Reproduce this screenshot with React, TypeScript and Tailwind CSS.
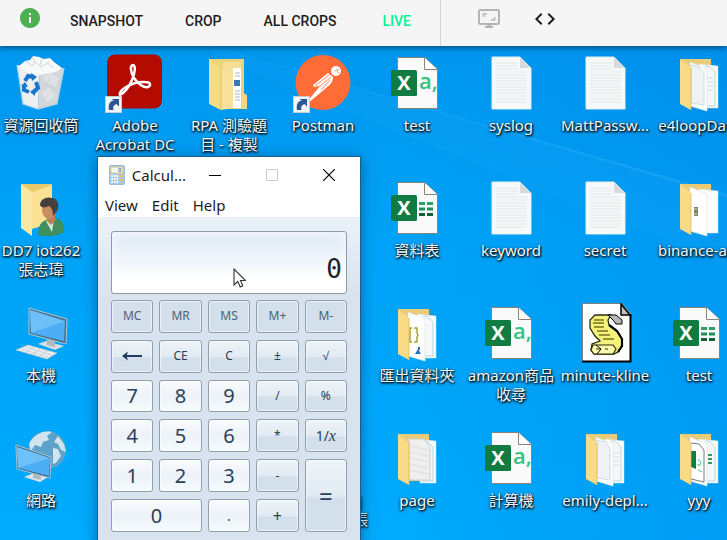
import { ReactNode } from 'react';
import { MdCode, MdInfo } from 'react-icons/md';

function Svg({ children }: { children: ReactNode }) {
  return (
    <svg viewBox="0 0 60 60" className="size-[60px] shrink-0" aria-hidden="true">
      {children}
    </svg>
  );
}

function Shortcut() {
  return (
    <g>
      <rect x="0.5" y="43.5" width="16" height="16" fill="#f2f4f7" stroke="#c8ccd2" />
      <path d="M4 57c-1-6 1-9 5-9.500L6.500 46H14v7.500l-2.500-2.500C8.500 52 7.500 54 8.500 57z" fill="#2b5797" />
    </g>
  );
}

function RecycleBin() {
  return (
    <Svg>
      <path d="M6 12 29 16 27 56 12 51z" fill="#edeff0" />
      <path d="M29 16 53 15 46 51 27 56z" fill="#d3d7da" />
      <path d="M8 13 14 8l5-1 3-4 6 1 5 2 6-1 4 4 8 6-6 4-16 3-14-3z" fill="#f8f9f9" />
      <path d="m15 8 6 5 3-4 6 5 7-4 5 5M21 4l3 5M31 6l-2 6" fill="none" stroke="#d0d5d8" />
      <path d="m31 24 8-4 9 5-3 9-8-3zM30 40l8-5 6 8-8 6z" fill="#e0e3e5" />
      <path d="m40 22-4 9 8 5M33 46l6-6" fill="none" stroke="#bfc5c9" strokeWidth="0.600" />
      <path d="M6 12 12 51 27 56 46 51 53 15" fill="none" stroke="#a9d2ea" strokeWidth="1.300" />
      <g fill="none" stroke="#1976cc" strokeWidth="4">
        <path d="m14 28 3-5 5 1" />
        <path d="m25 29 2 6-4 4" />
        <path d="m18 39-5-2v-5" />
      </g>
      <path d="m20 20 6 4-5 4zM24 35v8l-5-4zM10 33l4-4 3 5z" fill="#1976cc" />
    </Svg>
  );
}

function Acrobat() {
  return (
    <Svg>
      <rect x="2" y="1.500" width="55" height="54" rx="8" fill="#b30b00" />
      <path
        d="M15 42c4-2 9-8 12-15 3-7 4-14 1-15-3 0-3 6 1 13 4 6 10 10 14 9 4-2 2-5-3-5-6-.5-14 2-19 5-4 2-7 6-6 8z"
        fill="none"
        stroke="#fff"
        strokeWidth="2.500"
        strokeLinejoin="round"
      />
      <Shortcut />
    </Svg>
  );
}

function Postman() {
  return (
    <Svg>
      <circle cx="30" cy="29.500" r="27.500" fill="#ff6c37" />
      <circle cx="43" cy="18" r="5" fill="#fff" />
      <path d="m42 18 4-2M44 18l2 2" stroke="#ff6c37" strokeWidth="0.800" />
      <path d="m35 20 5 4c0 5-3 8-7 11l-7 6-11 9-1-1 9-11 4-5-6 1-1-2z" fill="#fff" />
      <path d="m22 33 14-11M26 34l12-10M28 37l9-10" stroke="#ff6c37" strokeWidth="0.800" />
      <Shortcut />
    </Svg>
  );
}

type FolderKind = 'code' | 'closed' | 'plain' | 'single' | 'image' | 'export' | 'sheets';

function Folder({ kind }: { kind: FolderKind }) {
  if (kind === 'closed') {
    return (
      <Svg>
        <path d="M10 6h35v34l3 2v14H19z" fill="#edd27c" />
        <path d="M24 9h18v45H24z" fill="#f5df95" />
        <path d="M34 15h8v40h-8z" fill="#fff" />
        <path d="M36 20h5M36 23h5M36 38h5M36 41h5M36 44h5M36 47h5" stroke="#a9b7c4" />
        <path d="M35 27h6v6h-6z" fill="#3479b8" />
        <path d="M22 16 34 13v42l-12 2z" fill="#f7e09a" />
        <path d="M10 6 22 15v42l-12-6z" fill="#f6da85" />
        <path d="M22 15v42" stroke="#dcb955" strokeWidth="0.800" />
        <path d="M43 40l5 3v13h-5z" fill="#f3d67f" />
      </Svg>
    );
  }
  return (
    <Svg>
      <path d="M11 6h31v47H20z" fill="#eacb78" />
      <path d="M30 11 49 13v42l-16 0z" fill="#fbfdfe" stroke="#d7e3ea" strokeWidth="0.500" />
      {kind !== 'image' && <path d="M36 13h4l6 6v34H34" fill="#f5f7f8" stroke="#a3cbe0" strokeWidth="0.800" />}
      {kind !== 'single' && <path d="M21 9 38 16v42l-17-5z" fill="#fff" stroke="#dde3e6" strokeWidth="0.700" />}
      {kind === 'single' && (
        <g>
          <path d="M22 11h15l6 8v33H22z" fill="#efefef" stroke="#b9c4ca" strokeWidth="0.700" />
          <path d="m23 18 18 4M23 24l18 4M23 30l18 4M23 36l18 4M23 42l18 4" stroke="#e2e2e2" strokeWidth="1.500" />
        </g>
      )}
      {kind === 'plain' && (
        <g>
          <path d="m22 12 8 2 5 6v32l-13-2z" fill="#f0f2f3" stroke="#bdd3df" strokeWidth="0.800" />
          <path d="M39 25h5M39 29h5M39 33h5M39 37h5" stroke="#d4dade" />
        </g>
      )}
      {kind === 'image' && (
        <g>
          <path d="M25 29h4v9h-4z" fill="#7e8566" />
          <path d="M25 31h3M25 36h3" stroke="#e0dfb8" />
        </g>
      )}
      {kind === 'export' && (
        <g>
          <path d="M25 25h-2v14h2M27 25h3v5l1 2-1 2v5h-3" fill="none" stroke="#a7a23a" strokeWidth="1.500" />
          <path d="m28 51 3-5 3 5zM31 44h2v3h-2z" fill="#2073bd" />
        </g>
      )}
      {kind === 'sheets' && (
        <g>
          <path d="m22 15 8 1 5 6v32l-13-3" fill="none" stroke="#555" strokeWidth="0.800" />
          <path d="M22 23h5v18l-5-2z" fill="#107c41" />
          <path d="M29 32c3 0 3 3 2 5h-3M29 42l4 2" stroke="#33c481" fill="none" />
          <path d="M39 27h4M39 31h4M39 35h4" stroke="#21a366" strokeWidth="2" />
        </g>
      )}
      <path d="M11 6 22 15v42l-11-6z" fill="#f9da85" />
      <path d="M22 15v42" stroke="#e0bb5c" strokeWidth="0.800" />
    </Svg>
  );
}

function Excel({ csv = false }: { csv?: boolean }) {
  return (
    <Svg>
      <path d="M10.500 4.500h27l13 12v39h-40z" fill="#fafafa" stroke="#8c8274" />
      <path d="M37.500 4.500v12h13" fill="#fff" stroke="#8c8274" />
      <rect x="4" y="17" width="26" height="26" rx="1.500" fill="#107c41" />
      <text x="17" y="37" textAnchor="middle" fill="#fff" className="font-['Open_Sans'] text-xl font-bold">
        X
      </text>
      {csv ? (
        <text x="32" y="36" fill="#33c481" className="font-['Open_Sans'] text-[22px] font-semibold">
          a,
        </text>
      ) : (
        <g>
          <path d="M32 25.500h6M40 25.500h6" stroke="#33a06a" strokeWidth="3" />
          <path d="M32 31h6M40 31h6" stroke="#1c8f57" strokeWidth="3" />
          <path d="M32 36.500h6M40 36.500h6" stroke="#185c37" strokeWidth="3" />
        </g>
      )}
    </Svg>
  );
}

function TextFile() {
  return (
    <Svg>
      <path d="M11 4h28l11 11v41H11z" fill="#f7f9f9" stroke="#e0f0f4" />
      <path
        d="M15 10h22M15 13h22M15 16h22M15 19h31M15 22h31M15 25h31M15 28h31M15 31h31M15 34h31M15 37h31M15 40h31M15 43h31M15 46h31M15 49h31"
        stroke="#e2e5e6"
      />
      <path d="M39 4v11h11z" fill="#d5dadd" />
    </Svg>
  );
}

function UserFolder() {
  return (
    <Svg>
      <path d="M10 6h31v40H20z" fill="#e9c869" />
      <path d="M21 14 41 7v38l-20 6z" fill="#fbe193" />
      <path d="M10 6 21 14v44l-11-8z" fill="#fae7a3" />
      <path d="M27 57c0-9 3-14 9-15l6 3 5-5c4 3 7 7 6 14-6 4-18 5-26 3z" fill="#3f8f5f" />
      <path d="m35 43 6 11 2-13z" fill="#dfe8e1" />
      <path d="M34 32h10v11l-4 4-4-4z" fill="#b97f55" />
      <ellipse cx="38" cy="32" rx="7" ry="9" fill="#c98d60" />
      <path d="M29 27c0-6 7-9 12-7 6 1 8 7 5 13l-4 5c0-5-1-8-4-10-4 2-8 2-9-1z" fill="#45403c" />
    </Svg>
  );
}

function Computer() {
  return (
    <Svg>
      <path d="m27 41 8-3 18 5-9 4z" fill="#d7dde1" />
      <path d="m36 35 8 3v6l-8-2z" fill="#aeb8bf" />
      <path d="m18 5 38 11-1 25-37-10z" fill="#4c6f89" stroke="#a9c9da" />
      <path d="m19 7 35 11-1 20-33-8z" fill="#4eaef5" />
      <path d="m19 7 35 11-34 12z" fill="#7cc7fb" opacity=".7" />
      <path d="m5 47 12-5 29 8-10 6z" fill="#e9ecee" stroke="#b9c3c9" strokeWidth="0.700" />
      <path d="m10 46 27 8M14 44l27 8M15 49l7-5M22 51l7-5M29 53l7-5" stroke="#c0c8cd" strokeWidth="0.700" />
    </Svg>
  );
}

function Network() {
  return (
    <Svg>
      <circle cx="36" cy="22" r="19" fill="#5ba3c9" />
      <path d="M18 16c4-9 14-14 23-12l-5 4 2 4-6 2-2 5-6-2-4 6zM47 8l6 8 2 8-5-2-3-6-4-2zM42 20l5 1 3 7-5 7-3 1z" fill="#cfe4ee" />
      <path d="m13 49 10-4 14 4-8 5z" fill="#dfe4e7" />
      <path d="m22 43 8 2v7l-8-2z" fill="#b0bac1" />
      <path d="m5 17 35 12-1 21L6 41z" fill="#3e5f78" stroke="#a9c9da" />
      <path d="m6 19 33 11-1 18-31-8z" fill="#4eaef5" />
      <path d="m6 19 33 11-32 10z" fill="#7cc7fb" opacity=".7" />
    </Svg>
  );
}

function Script() {
  return (
    <Svg>
      <path d="M7.500.5h39l9 10v48h-48z" fill="#fff" stroke="#808080" />
      <path d="M7 58.500h48.500V11" fill="none" stroke="#000" strokeWidth="2" />
      <path d="M46 1v11h9z" fill="#c0c0c0" stroke="#000" strokeWidth="1.500" />
      <path
        d="M20 12h16l-3 5 1 5 8 6 5 8v7l-4 6-4 2H19l-3-4 1-6 8-3-5-5-5-8v-8z"
        fill="#f4f27a"
        stroke="#2b2b10"
        strokeWidth="1.300"
      />
      <path d="M34 22l8 6 5 8v7l-4 6" fill="none" stroke="#000" strokeWidth="2.200" />
      <path d="M33 12h8l6 5v4h-6l-3-4z" fill="#b8b8b8" stroke="#000" />
      <path d="M18 42h20l3 4-3 5H19l-3-4z" fill="#fffbb0" stroke="#2b2b10" strokeWidth="1.200" />
      <path d="M19 17h10M18 20h11M19 24h10M22 28h11M24 32h11M28 36h11M21 46h5M30 46h3" stroke="#77751c" strokeWidth="1.400" />
      <path d="M21 42l5 4-4 5" fill="none" stroke="#000" />
    </Svg>
  );
}

type Item = { label: string; icon: ReactNode } | null;

const rows: Item[][] = [
  [
    { label: '資源回收筒', icon: <RecycleBin /> },
    { label: 'Adobe Acrobat DC', icon: <Acrobat /> },
    { label: 'RPA 測驗題目 - 複製', icon: <Folder kind="closed" /> },
    { label: 'Postman', icon: <Postman /> },
    { label: 'test', icon: <Excel csv /> },
    { label: 'syslog', icon: <TextFile /> },
    { label: 'MattPassw...', icon: <TextFile /> },
    { label: 'e4loopData', icon: <Folder kind="plain" /> },
  ],
  [
    { label: 'DD7 iot262 張志瑋', icon: <UserFolder /> },
    null,
    null,
    null,
    { label: '資料表', icon: <Excel /> },
    { label: 'keyword', icon: <TextFile /> },
    { label: 'secret', icon: <TextFile /> },
    { label: 'binance-api', icon: <Folder kind="image" /> },
  ],
  [
    { label: '本機', icon: <Computer /> },
    null,
    null,
    null,
    { label: '匯出資料夾', icon: <Folder kind="export" /> },
    { label: 'amazon商品收尋', icon: <Excel csv /> },
    { label: 'minute-kline', icon: <Script /> },
    { label: 'test', icon: <Excel /> },
  ],
  [
    { label: '網路', icon: <Network /> },
    null,
    null,
    { label: 'iot262 api j\n計算機資料張', icon: <Folder kind="plain" /> },
    { label: 'page', icon: <Folder kind="single" /> },
    { label: '計算機', icon: <Excel csv /> },
    { label: 'emily-depl...', icon: <Folder kind="plain" /> },
    { label: 'yyy', icon: <Folder kind="sheets" /> },
  ],
];

function DesktopItem({ item }: { item: Item }) {
  if (!item) return <div />;
  return (
    <div className="flex flex-col items-center gap-[3px] pt-[7px]">
      {item.icon}
      <span className="max-w-[90px] text-center text-[15px] leading-[19px] whitespace-pre-line text-[#f4f8fb] [text-shadow:1px_1px_2px_#000,0_1px_3px_#000]">
        {item.label}
      </span>
    </div>
  );
}

const memory = 'text-xs text-[#4d6178] bg-[#d3dfeb]';
const digit = 'text-xl text-[#2b4058] bg-linear-to-b from-[#f8fbfd] via-[#edf2f8] to-[#f4fdfe]';
const operator = 'text-xs text-[#2b4058] bg-linear-to-b from-[#edf4f9] from-0% via-[#e2ebf3] via-50% to-[#d3dfea] to-55%';

type Key = { name: string; tone: string; face?: ReactNode; span?: string };

const keys: Key[] = [
  { name: 'MC', tone: memory },
  { name: 'MR', tone: memory },
  { name: 'MS', tone: memory },
  { name: 'M+', tone: memory },
  { name: 'M-', tone: memory },
  {
    name: 'Backspace',
    tone: operator,
    face: (
      <svg viewBox="0 0 22 12" className="h-3 w-[22px]" aria-hidden="true">
        <path d="M5 6h16" stroke="#1f3d5c" strokeWidth="2" />
        <path d="M1 6 7 1.500 5.500 6 7 10.500z" fill="#1f3d5c" />
      </svg>
    ),
  },
  { name: 'CE', tone: operator },
  { name: 'C', tone: operator },
  { name: '±', tone: operator },
  { name: '√', tone: operator, face: <span className="font-['Liberation_Sans',sans-serif]">√</span> },
  { name: '7', tone: digit },
  { name: '8', tone: digit },
  { name: '9', tone: digit },
  { name: '/', tone: operator },
  { name: '%', tone: operator },
  { name: '4', tone: digit },
  { name: '5', tone: digit },
  { name: '6', tone: digit },
  { name: '*', tone: operator },
  {
    name: '1/x',
    tone: operator,
    face: (
      <span className="text-sm">
        1/<i className="font-['Liberation_Serif',serif] text-base">x</i>
      </span>
    ),
  },
  { name: '1', tone: digit },
  { name: '2', tone: digit },
  { name: '3', tone: digit },
  { name: '-', tone: operator },
  { name: '=', tone: operator, span: 'row-span-2', face: <span className="text-2xl">=</span> },
  { name: '0', tone: digit, span: 'col-span-2' },
  { name: '.', tone: digit, face: <span className="text-sm">.</span> },
  { name: '+', tone: operator, face: <span className="text-base">+</span> },
];

function Calculator() {
  return (
    <section
      aria-label="Calculator"
      className="absolute top-[110px] left-[97px] w-[264px] border border-[#1d5f8c] bg-white text-[#1b1b1b] shadow-[0_2px_12px_rgba(0,40,80,0.5)]"
    >
      <div className="flex h-9 items-center pr-0.5">
        <svg viewBox="0 0 16 20" className="ml-[11px] h-5 w-4" aria-hidden="true">
          <rect x="0.500" y="0.500" width="15" height="19" rx="1" fill="#a9cdea" stroke="#8db9dc" />
          <rect x="2" y="2" width="12" height="6" fill="#f3f7f4" stroke="#e5be6c" strokeWidth="0.800" />
          <path d="M10 3.500h2v3h-2z" fill="none" stroke="#4d6b88" strokeWidth="0.700" />
          <path d="M2.500 11h7M2.500 14h7M2.500 17h7" stroke="#fff" strokeWidth="2" strokeDasharray="1.600 1" />
          <path d="M11 11h3M11 15h3" stroke="#edba58" strokeWidth="2.500" />
        </svg>
        <span className="ml-[7px] grow text-[15px]">Calcul...</span>
        <button aria-label="Minimize" className="flex w-[58px] justify-center">
          <svg viewBox="0 0 12 12" className="size-3"><path d="M0 6.500h12" stroke="#000" /></svg>
        </button>
        <button aria-label="Maximize" disabled className="flex w-[58px] justify-center">
          <svg viewBox="0 0 12 12" className="size-3"><path d="M.5.5h11v11H.5z" fill="none" stroke="#ccc" /></svg>
        </button>
        <button aria-label="Close" className="flex w-[58px] justify-center">
          <svg viewBox="0 0 12 12" className="size-3"><path d="m0 0 12 12M12 0 0 12" stroke="#000" strokeWidth="1.200" /></svg>
        </button>
      </div>
      <nav className="flex h-6 items-center gap-3.5 px-[7px] text-[15px]">
        <button>View</button>
        <button>Edit</button>
        <button>Help</button>
      </nav>
      <div className="bg-linear-to-b from-[#eaf1f8] to-[#d8e3ef] to-25% px-[13px] pt-3.5 pb-4">
        <output className="flex h-[63px] items-end justify-end rounded-[3px] border border-[#8e9ba8] bg-linear-to-b from-[#e2ecf7] from-10% to-white to-80% px-1 pb-1 font-['DejaVu_Sans_Mono',monospace] text-[26px] text-[#222] shadow-[inset_0_0_10px_2px_rgba(255,255,255,0.6)]">
          0
        </output>
        <div className="mt-1.5 grid h-[232px] grid-cols-5 grid-rows-6 gap-x-1.5 gap-y-[7px]">
          {keys.map((key) => (
            <button
              key={key.name}
              aria-label={key.name}
              className={`flex items-center justify-center rounded-[3px] border border-[#8f9fb0] leading-none shadow-[inset_0_0_0_1px_rgba(255,255,255,0.5)] ${key.tone} ${key.span ?? ''}`}
            >
              {key.face ?? key.name}
            </button>
          ))}
        </div>
      </div>
    </section>
  );
}

function Pointer() {
  return (
    <svg viewBox="0 0 13 20" className="absolute top-[222px] left-[233px] h-5 w-[13px]" aria-hidden="true">
      <path d="M1 1v16l3.800-3.500 2.400 5.500 2.600-1.200L7.500 12.500h5z" fill="#fff" stroke="#333" strokeWidth="1.100" />
    </svg>
  );
}

export default function App() {
  return (
    <div className="flex h-screen flex-col overflow-hidden font-['Noto_Sans','Noto_Sans_CJK_TC',sans-serif]">
      <header className="z-10 flex h-[46px] shrink-0 items-stretch bg-[#f5f5f5] font-['Roboto',sans-serif] text-sm font-medium text-[#1d1d1d] shadow-[0_2px_5px_rgba(0,0,0,0.45)]">
        <nav className="flex items-center gap-[42px] border-r border-[#d4d4d4] pr-[29px] pb-1 pl-[18px]">
          <button aria-label="Info" className="-mr-3.5 pb-1.5 text-[#4caf50]">
            <MdInfo className="size-6" />
          </button>
          <button>SNAPSHOT</button>
          <button>CROP</button>
          <button>ALL CROPS</button>
          <button className="ml-1 text-[#00f590]">LIVE</button>
        </nav>
        <div className="flex items-center gap-8 pb-2 pl-9">
          <button aria-label="Fit to screen" className="text-[#b5b5b5]">
            <svg viewBox="0 0 24 24" className="size-6" aria-hidden="true">
              <rect x="2" y="3" width="20" height="14" rx="1" fill="none" stroke="currentColor" strokeWidth="2" />
              <path d="M6.500 10V7H10M17.500 10v3H14" fill="none" stroke="currentColor" strokeWidth="1.600" />
              <path d="M10 17h4v2h2v2H8v-2h2z" fill="currentColor" />
            </svg>
          </button>
          <button aria-label="Code">
            <MdCode className="size-6" />
          </button>
        </div>
      </header>
      <main className="relative grow overflow-hidden bg-linear-to-b from-[#0096ee] via-[#00a3f7] via-40% to-[#00aafc]">
        <svg viewBox="0 0 727 494" preserveAspectRatio="none" className="absolute inset-0 size-full" aria-hidden="true">
          <defs>
            <linearGradient id="shade" x1="0" x2="1">
              <stop offset="0.550" stopColor="#0085e8" stopOpacity="0" />
              <stop offset="1" stopColor="#0085e8" stopOpacity="0.350" />
            </linearGradient>
          </defs>
          <path d="M0 0h727v494H0z" fill="url(#shade)" />
          <path d="M212 0 727 148v3L210 0z" fill="#4cc0ff" opacity=".25" />
          <path d="M212 1 727 150v70L212 10z" fill="#27b0ff" opacity=".12" />
        </svg>
        <div className="relative -ml-1.5 grid w-max auto-rows-[125px] grid-cols-[repeat(8,94px)]">
          {rows.flat().map((item, index) => (
            <DesktopItem key={index} item={item} />
          ))}
        </div>
        <Calculator />
        <Pointer />
      </main>
    </div>
  );
}
